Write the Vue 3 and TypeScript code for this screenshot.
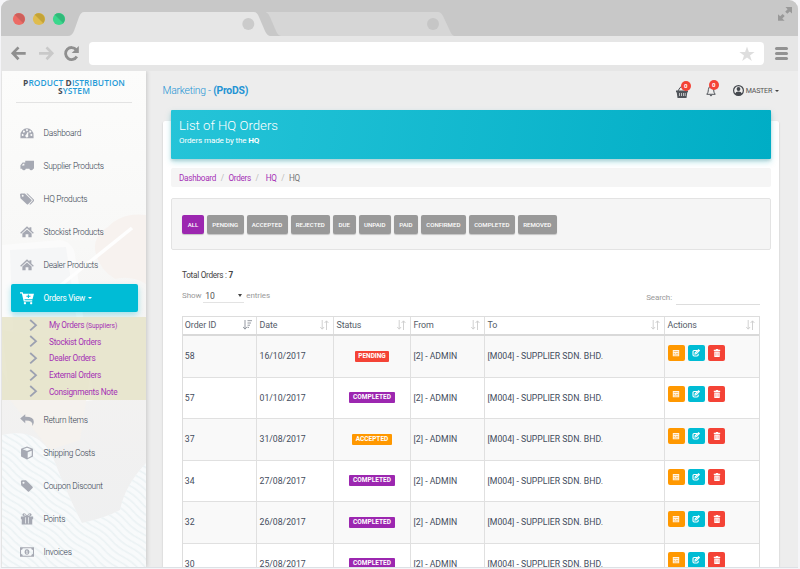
<script setup lang="ts">
interface NavItem { label: string; icon: string }
interface Crumb { label: string; link: boolean; cls: string }
interface Filter { label: string; width: number }
interface Order { id: number; date: string; status: string }

const icons: Record<string, string> = {
  dashboard: 'M.5 10.5A7.5 8 0 0 1 15.5 10.5V14H.5ZM2 10.2a1.1 1.1 0 1 1 0 .1ZM3.4 6.4a1.1 1.1 0 1 1 0 .1ZM6.9 4.6a1.1 1.1 0 1 1 0 .1ZM10.6 6.4a1.1 1.1 0 1 1 0 .1ZM11.9 10.2a1.1 1.1 0 1 1 0 .1ZM8.7 6.8L7.2 9.8A1.7 1.7 0 1 0 9.2 10.4L9.7 7.2Z',
  truck: 'M6 2H16V11H15a2.2 2.2 0 0 1-4.3 0H6.6a2.2 2.2 0 0 1-4.3 0H.5V7L3 4H6ZM2 7.4H5V5.4H3.6Z',
  tags: 'M0 2.5L1 1.6H5.6L13 8.8Q13.6 9.6 13 10.3L9.2 14Q8.5 14.5 7.8 14L.5 7ZM2 4.2a1.1 1.1 0 1 0 2.2 0 1.1 1.1 0 0 0-2.2 0ZM7.3 1.6H8.7L16 8.8Q16.5 9.6 16 10.3L12 14.2Q11.3 14.6 10.7 14L14.2 10.4Q15 9.6 14.2 8.6Z',
  home: 'M8 1.5L10.8 4.1V2.6H13V6.2L15.8 8.8 14.8 9.9 8 3.8 1.2 9.9.2 8.8ZM8 5L13.3 9.7V14H9.6V10.5H6.4V14H2.7V9.7Z',
  reply: 'M6 1.4V4.4Q15.8 4.2 15.8 10.2Q15.8 12.5 14 14.8Q15.4 8.5 6 8.6V11.6L.2 6.4Z',
  box: 'M8 .6L14.8 3.2V12L8 15.4 1.2 12V3.2ZM8 2L3.2 3.8 8 5.8 12.8 3.8ZM8.8 7.2V13.6L13.4 11.2V5.3Z',
  tag: 'M1 2.5L2 1.4H6.8L14.4 8.8Q15 9.6 14.4 10.3L10.4 14.2Q9.7 14.8 9 14.2L1.3 7ZM2.8 4.2a1.2 1.2 0 1 0 2.4 0 1.2 1.2 0 0 0-2.4 0Z',
  gift: 'M1 5H6.3Q1.8 4.5 3 2.2Q5 0 8 4Q11 0 13 2.2Q14.2 4.5 9.7 5H15V8.4H14V14.4H2V8.4H1ZM4.4 3Q4.5 4.2 7 4.2Q5.2 1.8 4.4 3ZM11.6 3Q10.8 1.8 9 4.2Q11.5 4.2 11.6 3ZM6 6V13H6.8V6ZM9.2 6V13H10V6Z',
  money: 'M0 2.6H16V13.4H0ZM1.2 5.8V10.2Q3 10.4 3.2 12.2H12.8Q13 10.4 14.8 10.2V5.8Q13 5.6 12.8 3.8H3.2Q3 5.6 1.2 5.8ZM8 4.8C11.6 4.8 11.6 11.2 8 11.2S4.4 4.8 8 4.8ZM7 6.5V7.4H7.5V9H6.8V9.8H9.2V9H8.5V6.3H7.8Z',
  cart: 'M0 1.4H3.1L3.6 3H16L14.3 9.3H5.1L5.4 10.6H14V12H4.3L2.1 2.8H0ZM5.6 12.5a1.3 1.3 0 1 0 .1 0ZM12.7 12.5a1.3 1.3 0 1 0 .1 0ZM9 4V5.4H7.3V6.5H9V8H10.2V6.5H12V5.4H10.2V4Z',
}

const topNav: NavItem[] = [
  { label: 'Dashboard', icon: 'dashboard' },
  { label: 'Supplier Products', icon: 'truck' },
  { label: 'HQ Products', icon: 'tags' },
  { label: 'Stockist Products', icon: 'home' },
  { label: 'Dealer Products', icon: 'home' },
]
const subNav = ['My Orders', 'Stockist Orders', 'Dealer Orders', 'External Orders', 'Consignments Note']
const bottomNav: NavItem[] = [
  { label: 'Return Items', icon: 'reply' },
  { label: 'Shipping Costs', icon: 'box' },
  { label: 'Coupon Discount', icon: 'tag' },
  { label: 'Points', icon: 'gift' },
  { label: 'Invoices', icon: 'money' },
]
const crumbs: Crumb[] = [
  { label: 'Dashboard', link: true, cls: '' },
  { label: 'Orders', link: true, cls: '' },
  { label: 'HQ', link: true, cls: 'wide' },
  { label: 'HQ', link: false, cls: '' },
]
const filters: Filter[] = [
  { label: 'ALL', width: 22 },
  { label: 'PENDING', width: 36.5 },
  { label: 'ACCEPTED', width: 41 },
  { label: 'REJECTED', width: 39.5 },
  { label: 'DUE', width: 22.5 },
  { label: 'UNPAID', width: 32.3 },
  { label: 'PAID', width: 24 },
  { label: 'CONFIRMED', width: 45 },
  { label: 'COMPLETED', width: 46 },
  { label: 'REMOVED', width: 39 },
]
const columns = ['Order ID', 'Date', 'Status', 'From', 'To', 'Actions']
const orders: Order[] = [
  { id: 58, date: '16/10/2017', status: 'pending' },
  { id: 57, date: '01/10/2017', status: 'completed' },
  { id: 37, date: '31/08/2017', status: 'accepted' },
  { id: 34, date: '27/08/2017', status: 'completed' },
  { id: 32, date: '26/08/2017', status: 'completed' },
  { id: 30, date: '25/08/2017', status: 'completed' },
]
</script>

<template>
  <div class="browser">
    <header class="chrome">
      <svg class="tabs" width="796" height="36" viewBox="1 0 796 36">
        <path fill="#d6d6d6" d="M266 12H438Q441 12 443 16L450 31Q452 36 455 36H270Z" />
        <path fill="#c8c8c8" d="M250 12H264Q268 12 270 17L276 31Q278 35.5 281 36H250Z" />
        <path fill="#e6e6e6" d="M68 36Q72 36 74 31L79 17Q81 12 84 12H254Q257 12 259 17L265 31Q267 35.5 270 36Z" />
        <circle cx="248.3" cy="24" r="6" fill="#cbcbcb" />
        <circle cx="433" cy="24" r="6" fill="#c6c6c6" />
        <g>
          <circle cx="19" cy="19" r="6.1" fill="#ec6b65" /><path d="M14.7 14.7A6.1 6.1 0 0 1 23.3 23.3Z" fill="#cd5f5b" />
          <circle cx="39" cy="19" r="6.1" fill="#dfbc4e" /><path d="M34.7 14.7A6.1 6.1 0 0 1 43.3 23.3Z" fill="#c3a337" />
          <circle cx="59" cy="19" r="6.1" fill="#3ad78c" /><path d="M54.7 14.7A6.1 6.1 0 0 1 63.3 23.3Z" fill="#30b979" />
        </g>
        <path fill="#999" d="M785.5 7H792V13.5L789.8 11.4 787.3 13.8 785.2 11.7 787.6 9.2ZM778 14.3L780.2 16.3 782.6 13.9 784.7 16 782.3 18.5 784.6 20.8H778Z" />
      </svg>
      <div class="toolbar">
        <svg class="navicons" width="88" height="35" viewBox="1 36 88 35" fill="none" stroke-width="2.7">
          <path stroke="#8f8f8f" d="M25.7 53.3H13M18.5 47.4L12.8 53.3L18.5 59.2" />
          <path stroke="#c9c9c9" d="M39 53.3H52M46.5 47.4L52.2 53.3L46.5 59.2" />
          <path stroke="#8f8f8f" d="M76.3 49.8A6 6 0 1 0 76.8 56.5" stroke-width="2.8" />
          <path fill="#8f8f8f" d="M78.8 46V53H71.7Z" />
        </svg>
        <div class="address">
          <svg width="16" height="16" viewBox="0 0 16 16"><path fill="#dedede" d="M8 .4L9.9 6H15.6L11 9.4 12.8 15 8 11.6 3.2 15 5 9.4.4 6H6.1Z" /></svg>
        </div>
        <div class="burger"><i></i><i></i><i></i></div>
      </div>
    </header>

    <div class="page">
      <aside class="sidebar">
        <svg class="photo" width="144" height="496" viewBox="2 71 144 496">
          <defs>
            <linearGradient id="fade" x1="0" y1="0" x2="0" y2="1">
              <stop offset="0" stop-color="#fcfcfb" /><stop offset=".35" stop-color="#f8f8f7" /><stop offset=".6" stop-color="#f3f2f1" /><stop offset="1" stop-color="#eeeff0" />
            </linearGradient>
            <pattern id="stripes" width="40" height="6" patternUnits="userSpaceOnUse" patternTransform="rotate(38)">
              <path d="M0 3Q10 1 20 3T40 3" fill="none" stroke="#eaf1f3" stroke-width="1.4" />
            </pattern>
          </defs>
          <path fill="url(#fade)" d="M2 71H146V567H2Z" />
          <path fill="#fbfbfb" d="M2 245L60 240Q73 242 75 255L94 400 20 410 2 370Z" />
          <path fill="#f5f6f7" d="M10 250L66 247 82 355 14 362Z" />
          <path fill="#f5f2ee" d="M2 330L95 345 80 440 50 450 10 400Z" />
          <path fill="#f7f2ef" d="M146 215Q122 212 108 227Q94 235 95 250Q98 268 115 279Q132 275 146 284Z" />
          <path fill="none" stroke="#fefefe" stroke-width="3.5" d="M132 228L61 285" />
          <path fill="#f8fafb" d="M2 435Q36 427 52 455Q65 490 82 523Q105 518 120 510Q125 485 146 463V567H2Z" />
          <path fill="url(#stripes)" d="M2 435Q36 427 52 455Q65 490 82 523Q105 518 120 510Q125 485 146 463V567H2Z" />
        </svg>
        <div class="brand"><b>P</b>RODUCT <b>D</b>ISTRIBUTION<br /><b>S</b>YSTEM</div>
        <nav class="menu">
          <a v-for="n in topNav" :key="n.label" class="item">
            <svg width="14" height="14" viewBox="0 0 16 16"><path fill-rule="evenodd" :d="icons[n.icon]" /></svg><span>{{ n.label }}</span>
          </a>
          <a class="item active">
            <svg width="14" height="14" viewBox="0 0 16 16"><path fill-rule="evenodd" :d="icons.cart" /></svg><span>Orders View</span><i class="caret"></i>
          </a>
          <div class="submenu">
            <a v-for="(s, i) in subNav" :key="s">
              <svg width="9" height="13" viewBox="0 0 9 13"><path d="M1.2 1L7 6.2L1.2 11.4" /></svg>
              <span>{{ s }} <small v-if="i === 0">(Suppliers)</small></span>
            </a>
          </div>
          <a v-for="n in bottomNav" :key="n.label" class="item">
            <svg width="14" height="14" viewBox="0 0 16 16"><path fill-rule="evenodd" :d="icons[n.icon]" /></svg><span>{{ n.label }}</span>
          </a>
        </nav>
      </aside>

      <main class="main">
        <div class="topbar">
          <h1>Marketing - <b>(ProDS)</b></h1>
          <div class="user-tools">
            <span class="notify basket">
              <svg width="12" height="12" viewBox="0 0 12 12"><path fill="#50545a" fill-rule="evenodd" d="M0 4.5H12V6.3H11.3L10.5 12H1.5L.7 6.3H0ZM3 7V10H3.7V7ZM5.2 7V10H5.9V7ZM7 7V10H7.7V7ZM8.8 7V10H9.5V7Z" /><path d="M2 5L4 1.6Q5 .6 6.5 1M10 5L8.5 2" stroke="#50545a" fill="none" /></svg>
              <em>0</em>
            </span>
            <span class="notify bell">
              <svg width="10" height="13" viewBox="0 0 10 13"><path d="M.8 10.3Q2.4 8.6 2.4 5.5Q2.5 2.4 5 2.4T7.6 5.5Q7.6 8.6 9.2 10.3Z" fill="none" stroke="#50545a" /><path d="M3.6 11H6.4L5 12.5Z" fill="#50545a" /></svg>
              <em>0</em>
            </span>
            <svg class="avatar" width="11" height="11" viewBox="0 0 11 11"><circle cx="5.5" cy="5.5" r="4.9" fill="none" stroke="#44484e" stroke-width="1.2" /><circle cx="5.5" cy="4" r="1.9" fill="#44484e" /><path d="M2 8.7Q2.8 6.4 5.5 6.4T9 8.7Q7.7 10.4 5.5 10.4T2 8.7Z" fill="#44484e" /></svg>
            <span class="master">MASTER</span><i class="caret dark"></i>
          </div>
        </div>

        <section class="card">
          <div class="banner">
            <h2>List of HQ Orders</h2>
            <p>Orders made by the <b>HQ</b></p>
          </div>
          <ol class="breadcrumb">
            <li v-for="(c, i) in crumbs" :key="i" :class="[{ link: c.link }, c.cls]">{{ c.label }}</li>
          </ol>
          <div class="well">
            <button v-for="(f, i) in filters" :key="f.label" :class="{ on: i === 0 }" :style="{ width: f.width + 'px' }">{{ f.label }}</button>
          </div>
          <div class="content">
            <p class="total">Total Orders : <b>7</b></p>
            <div class="controls">
              <div class="length">Show <span class="select">10<i></i></span> entries</div>
              <div class="search">Search:<span></span></div>
            </div>
            <div class="table">
              <div class="row head">
                <div v-for="(c, i) in columns" :key="c" class="cell">
                  <span>{{ c }}</span>
                  <svg v-if="i === 0" class="sorted" width="9" height="10" viewBox="0 0 9 10"><path d="M2 0V9M0 6.8L2 9.2L4 6.8M4.5 .7H9M4.5 3H8M4.5 5.2H7M4.5 7.4H6" /></svg>
                  <svg v-else width="9" height="10" viewBox="0 0 9 10"><path d="M2.2 0V9M.3 7L2.2 9.2L4.1 7M6.5 10V1M4.6 3L6.5 .8L8.4 3" /></svg>
                </div>
              </div>
              <div v-for="o in orders" :key="o.id" class="row">
                <div class="cell">{{ o.id }}</div>
                <div class="cell date">{{ o.date }}</div>
                <div class="cell status"><span :class="['label', o.status]">{{ o.status.toUpperCase() }}</span></div>
                <div class="cell">[2] - ADMIN</div>
                <div class="cell to">[M004] - SUPPLIER SDN. BHD.</div>
                <div class="cell actions">
                  <span class="act view"><svg width="8" height="8" viewBox="0 0 8 8"><path fill="#fff" fill-opacity=".9" fill-rule="evenodd" d="M.8 1H7.2V7.2H.8ZM1.7 2.4V3.1H6.3V2.4ZM1.7 4.2V4.8H3V4.2ZM3.8 4.2V4.8H6.3V4.2ZM1.7 5.7V6.3H6.3V5.7Z" /></svg></span>
                  <span class="act edit"><svg width="8" height="8" viewBox="0 0 8 8"><path fill="none" stroke="#fff" stroke-width="1.1" d="M5 1.5H2.2Q1 1.5 1 2.8V5.8Q1 7 2.2 7H5Q6.2 7 6.2 5.8V4.8M3 5L3.2 3.8L6.6 .8L7.4 1.6L4.2 4.8Z" /></svg></span>
                  <span class="act remove"><svg width="8" height="8" viewBox="0 0 8 8"><path fill="#fff" fill-rule="evenodd" d="M3 0H5L5.4 .8H7.2V2H.8V.8H2.6ZM1.3 2.4H6.7V8H1.3ZM2.7 3.4V6.8H3.2V3.4ZM4.8 3.4V6.8H5.3V3.4Z" /></svg></span>
                </div>
              </div>
            </div>
          </div>
        </section>
      </main>
    </div>
  </div>
</template>

<style>
body { background: #f5f5f8; overflow: hidden; }
</style>

<style scoped>
* { box-sizing: border-box; }
.browser { width: 797px; height: 568px; margin-left: 1px; border-radius: 9px 9px 0 0; overflow: hidden; font-family: Roboto, "Liberation Sans", sans-serif; color: #4c5361; border-bottom: 1px solid #dde1e5; background: #e6e6e6; }
svg { display: block; flex: none; }
.chrome { height: 71px; background: #c8c8c8; }
.toolbar { display: flex; align-items: center; height: 35px; background: #e6e6e6; }
.address { display: flex; align-items: center; justify-content: flex-end; width: 675px; height: 23px; padding-right: 9px; border-radius: 4px; background: #fff; }
.burger { display: grid; gap: 2px; width: 13px; margin-left: 11px; }
.burger i { height: 3px; border-radius: 2px; background: #929292; }
.page { display: flex; height: 496px; padding: 0 2px 0 1px; background: #ededed; overflow: hidden; }
.sidebar { position: relative; width: 144px; height: 496px; padding-top: 7.5px; overflow: hidden; box-shadow: 1px 0 4px #c8c8c8; z-index: 1; flex: none; }
.photo { position: absolute; inset: 0; z-index: -1; }
.brand { height: 24.5px; margin: 0 14px; border-bottom: 1px solid #e3e3e3; color: #269bd8; font: 600 8.4px/8px "Open Sans", "Liberation Sans", sans-serif; letter-spacing: .1px; text-align: center; white-space: nowrap; }
.brand b { color: #474b52; font-weight: 700; }
.menu { padding-top: 13.5px; }
.item { display: flex; align-items: center; height: 33px; padding-left: 18px; font-size: 8.4px; letter-spacing: -.27px; font-weight: 300; color: #333c4d; }
.item svg { fill: #a6a9b3; }
.item span { margin-left: 9.5px; white-space: nowrap; }
.item.active { height: 28px; margin: 2.5px 8.5px 5px 9px; padding-left: 9px; border-radius: 2px; background: #00bcd6; color: #fff; box-shadow: 0 3px 6px #00bcd455; font-weight: 400; letter-spacing: -.32px; }
.item.active svg { fill: #fff; }
.caret { width: 0; height: 0; margin-left: 3px; border: 2px solid transparent; border-top: 2.5px solid currentColor; border-bottom: 0; }
.submenu { height: 83px; margin-bottom: 3px; background: #e6e4c9e0; color: #a531b5; }
.submenu a { display: flex; align-items: center; height: 16.6px; padding-left: 27px; font-size: 8.3px; letter-spacing: -.3px; }
.submenu svg { fill: none; stroke: #9ca1b1; stroke-width: 1.8; }
.submenu span { margin-left: 11px; white-space: nowrap; }
.submenu small { font-size: 6.7px; letter-spacing: -.1px; }
.main { width: 616px; margin-left: 17px; }
.topbar { display: flex; align-items: center; height: 50px; padding-bottom: 11px; }
h1 { margin: 0 0 0 -.5px; font-size: 10.4px; letter-spacing: -.25px; font-weight: 300; color: #2494d4; white-space: nowrap; }
h1 b { font-weight: 700; }
.user-tools { display: flex; align-items: center; margin-left: auto; }
.notify { position: relative; }
.notify em { position: absolute; left: 5px; top: -5px; width: 10px; height: 10px; border-radius: 5px; background: #f44336; color: #fff; font: 700 6px/10px Roboto, sans-serif; text-align: center; }
.basket { top: 1px; }
.bell { margin: 0 17px 0 18px; }
.bell em { left: 3px; top: -4px; }
.master { margin: 0 3px 0 2px; font-size: 7.1px; letter-spacing: -.25px; color: #555; }
.caret.dark { margin: 0; color: #444; }
.card { width: 616px; height: 446px; padding: 0 8px; background: #fff; border-radius: 2px 2px 0 0; box-shadow: 0 1px 2px #0003; }
.banner { position: relative; top: -11px; height: 49px; margin-bottom: -2px; padding: 7px 8px; border-radius: 1px; color: #fff; background: linear-gradient(100deg, #25c4d8, #00adc5); box-shadow: 0 3px 6px #00acc144, 0 2px 3px #0002; }
h2 { margin: 0; font-size: 13.2px; line-height: 17px; font-weight: 300; }
.banner p { margin: 1px 0 0; font-size: 8.1px; line-height: 10px; letter-spacing: -.15px; }
.breadcrumb { display: flex; align-items: center; height: 19px; margin: 0; padding: 0 8px; background: #f5f5f5; border-radius: 2px; font-size: 8.2px; letter-spacing: -.28px; color: #777; list-style: none; font-weight: 400; }
.breadcrumb li + li::before { content: "/"; padding: 0 4.6px; color: #bbb; }
.breadcrumb li.wide::before { padding-right: 7px; }
.breadcrumb .link { color: #a531b5; }
.well { display: flex; gap: 3px; height: 52px; margin-top: 11px; padding: 16px 10px; border: 1px solid #e3e3e3; border-radius: 2px; background: #f5f5f5; }
button { height: 19px; padding: 0; border: 0; border-radius: 2px; background: #999; color: #fff; font: 500 6.1px/19px Roboto, sans-serif; white-space: nowrap; box-shadow: 0 1px 1px #0003; }
button.on { background: #9c27b0; }
.content { padding: 19px 11px 0; }
.total { margin: 0; font-size: 8.2px; line-height: 12px; letter-spacing: -.28px; color: #444; }
.controls { display: flex; justify-content: space-between; height: 35px; font-size: 8px; letter-spacing: -.1px; color: #999; }
.length { display: flex; padding-top: 9px; line-height: 12px; }
.select { display: flex; align-items: center; justify-content: space-between; width: 41px; height: 14px; margin: -1px 2px 0 2px; padding: 0 2px; border-bottom: 1px solid #e3e3e3; color: #555; font-size: 8.6px; }
.select i { border: 2px solid transparent; border-top: 3px solid #444; border-bottom: 0; }
.search { display: flex; height: 24px; padding-top: 11px; line-height: 12px; }
.search span { width: 84px; margin-left: 4px; border-bottom: 1px solid #ddd; }
.table { border: 1px solid #ddd; border-bottom: 0; width: 578px; }
.row { display: grid; grid-template-columns: 74px 77px 77px 74px 180px 94px; height: 41.5px; border-bottom: 1px solid #e0e0e0; }
.row:nth-child(even) { background: #f9f9f9; }
.cell { display: flex; align-items: center; padding-left: 2.5px; border-right: 1px solid #e0e0e0; font-size: 8.7px; color: #434c5c; white-space: nowrap; }
.cell:first-child { padding-left: 1.8px; }
.cell:last-child { border-right: 0; }
.head { height: 19px; border-bottom: 2px solid #d9d9d9; }
.head .cell { justify-content: space-between; padding-right: 4px; padding-bottom: 1px; font-size: 8.9px; letter-spacing: -.1px; color: #555c68; }
.head svg { fill: none; stroke: #ccc; stroke-width: .9; }
.head .sorted { stroke: #888d96; }
.status { justify-content: center; padding: 0; }
.status.cell { padding: 0; }
.label { height: 11px; padding: 0 3.7px; border-radius: 1px; color: #fff; font-size: 6.5px; line-height: 11.5px; font-weight: 700; }
.pending { background: #f44336; }
.completed { background: #9c27b0; }
.accepted { background: #ff9800; }
.actions { gap: 3.3px; padding-bottom: 7px; }
.act { display: grid; place-items: center; width: 17px; height: 16px; border-radius: 2px; }
.view { background: #ff9800; }
.edit { background: #00bcd4; }
.remove { background: #f44336; }
</style>
